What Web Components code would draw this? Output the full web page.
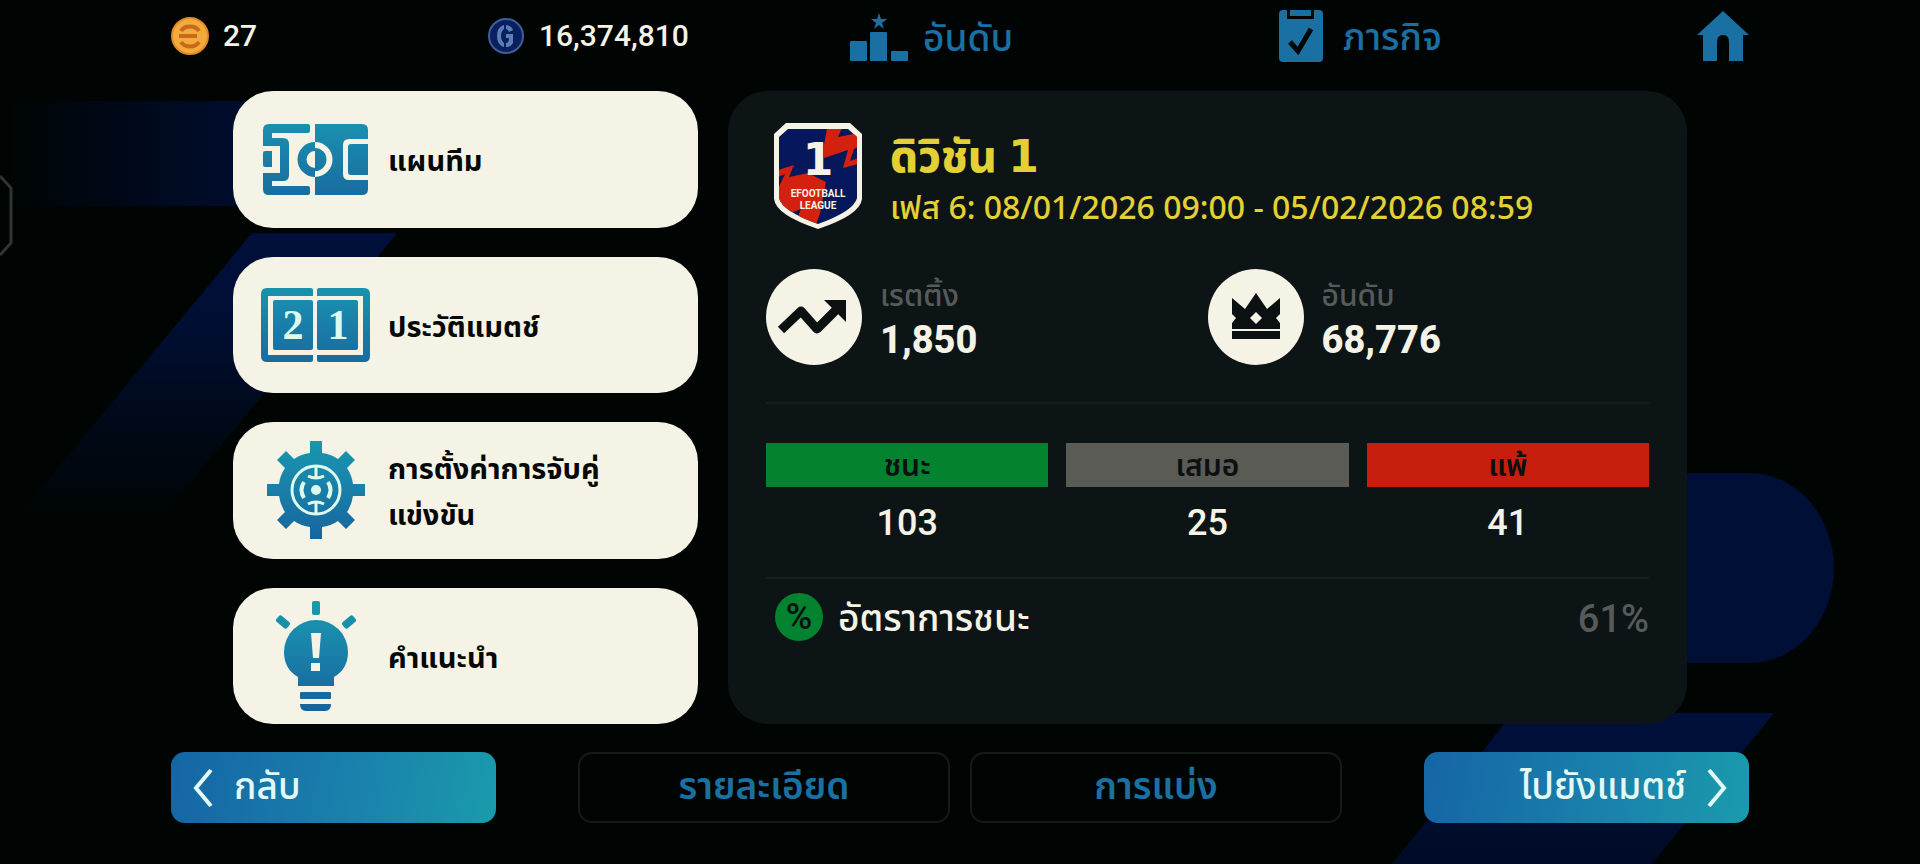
<!DOCTYPE html>
<html lang="th">
<head>
<meta charset="utf-8">
<meta name="viewport" content="width=device-width, initial-scale=1">
<title>ดิวิชัน 1</title>
<style>
  body {
    margin: 0;
    background: #000402;
    color: #f5f3e6;
    font-family: Roboto, "Noto Sans Thai", "Noto Sans", sans-serif;
    --side: 171px;
    --cream: #f5f3e6;
    --blue: #1a70a3;
    --muted: #565b5a;
    --yellow: #e3d034;
    --ink: #0b1010;
  }
</style>
</head>
<body>

<league-screen>
  <coin-balance slot="header" kind="coin">27</coin-balance>
  <coin-balance slot="header" kind="gp">16,374,810</coin-balance>
  <top-link slot="header" icon="ranking">อันดับ</top-link>
  <top-link slot="header" icon="missions">ภารกิจ</top-link>
  <top-link slot="header" icon="home" label="หน้าหลัก"></top-link>

  <menu-card slot="menu" icon="pitch">แผนทีม</menu-card>
  <menu-card slot="menu" icon="score">ประวัติแมตช์</menu-card>
  <menu-card slot="menu" icon="gear">การตั้งค่าการจับคู่<br>แข่งขัน</menu-card>
  <menu-card slot="menu" icon="bulb">คำแนะนำ</menu-card>

  <division-panel slot="panel">
    <division-title slot="title" number="1">ดิวิชัน
      <span slot="phase">เฟส 6: 08/01/2026 09:00 - 05/02/2026 08:59</span>
    </division-title>
    <stat-badge slot="stats" icon="trend" label="เรตติ้ง">1,850</stat-badge>
    <stat-badge slot="stats" icon="crown" label="อันดับ">68,776</stat-badge>
    <result-tally slot="results" type="win" label="ชนะ">103</result-tally>
    <result-tally slot="results" type="draw" label="เสมอ">25</result-tally>
    <result-tally slot="results" type="loss" label="แพ้">41</result-tally>
    <win-rate slot="rate" label="อัตราการชนะ">61%</win-rate>
  </division-panel>

  <nav-button slot="footer" kind="back">กลับ</nav-button>
  <nav-button slot="actions">รายละเอียด</nav-button>
  <nav-button slot="actions">การแบ่ง</nav-button>
  <nav-button slot="next" kind="next">ไปยังแมตช์</nav-button>
</league-screen>

<script>
const TEAL_GRADIENT = `
  <defs>
    <linearGradient id="teal" gradientUnits="userSpaceOnUse" x1="0" y1="0" x2="0" y2="110">
      <stop offset="0" stop-color="#179ba8"/>
      <stop offset="0.3" stop-color="#1a8aad"/>
      <stop offset="1" stop-color="#17629c"/>
    </linearGradient>
  </defs>`;

const ICONS = {
  coin: `<svg width="38" height="38" viewBox="0 0 38 38">
    <circle cx="19" cy="19" r="18" fill="#f2ab3c" stroke="#e08a22" stroke-width="2"/>
    <g fill="none" stroke="#c9691c" stroke-width="4">
      <path d="M10 14a10 8 0 0 1 18 0M10 25a10 8 0 0 0 18 0"/>
      <path d="M8 19h18"/>
    </g></svg>`,

  gp: `<svg width="38" height="38" viewBox="0 0 38 38">
    <circle cx="19" cy="19" r="17" fill="#0a1f5e" stroke="#3f5f9c" stroke-width="2"/>
    <path d="M17 8Q10 10 10 19T17 30V26Q14 24 14 19T17 12zM19 17H26V26Q24 30 19 30V26Q22 26 22 21H19zM19 8Q25 9 26 13L22 15Q21 12 19 12z" fill="#5b7fb8"/></svg>`,

  ranking: `<svg width="58" height="48" viewBox="0 0 58 48">
    <g fill="#1a70a3">
      <rect x="0" y="28" width="17" height="20" rx="1"/>
      <rect x="20" y="19" width="17" height="29" rx="1"/>
      <rect x="41" y="38" width="17" height="10" rx="1"/>
      <path d="M29 0l2 6h6l-5 4 2 6-5-4-5 4 2-6-5-4h6z"/>
    </g></svg>`,

  missions: `<svg width="44" height="52" viewBox="0 0 44 52">
    <path d="M4 0h4v9h27V0h5q4 0 4 4v44q0 4-4 4H4q-4 0-4-4V4q0-4 4-4z" fill="#1a70a3"/>
    <path d="M11 0h21v6H11z" fill="#1a70a3"/>
    <path d="M11 32l8 9 13-22" fill="none" stroke="#000402" stroke-width="5"/></svg>`,

  home: `<svg width="52" height="50" viewBox="0 0 52 50">
    <path d="M26 0L52 24H46V50H32V31q0-7-6-7t-6 7V50H6V24H0z" fill="#1a70a3"/></svg>`,

  pitch: `<svg width="110" height="110" viewBox="0 0 110 110">${TEAL_GRADIENT}
    <g fill="url(#teal)">
      <path d="M47 20H8q-6 0-6 6V42H19V69H2V85q0 6 6 6H47q2 0 2-2V84q0-2-2-2H11V77H22q6 0 6-6V40q0-6-6-6H11V29H47q2 0 2-2V22q0-2-2-2z"/>
      <path d="M2 49q0-2 2-2H11V63H4q-2 0-2-2z"/>
      <path d="M54 20H101q6 0 6 6V35H88q-6 0-6 6V70q0 6 6 6H107V85q0 6-6 6H54z"/>
    </g>
    <path d="M54 38a17 17 0 0 0 0 35V64a8 8 0 0 1 0-17z" fill="url(#teal)"/>
    <path d="M107 40H90q-3 0-3 3V68q0 3 3 3H107z" fill="url(#teal)"/>
    <path d="M54 41a14 14 0 0 1 0 29" fill="none" stroke="#f5f3e6" stroke-width="6"/></svg>`,

  score: `<svg width="110" height="110" viewBox="0 0 110 110">${TEAL_GRADIENT}
    <g fill="url(#teal)">
      <path d="M50 18H6q-6 0-6 6V86q0 6 6 6H50q2 0 2-2V85H7V26H52V20q0-2-2-2z"/>
      <path d="M58 18H103q6 0 6 6V86q0 6-6 6H58q-2 0-2-2V85H102V26H56V20q0-2 2-2z"/>
      <rect x="12" y="30" width="40" height="50" rx="2"/>
      <rect x="56" y="30" width="41" height="50" rx="2"/>
    </g>
    <g fill="#dcfbee" font-family="Liberation Serif" font-weight="700" font-size="42" text-anchor="middle">
      <text x="32" y="69">2</text><text x="77" y="69">1</text>
    </g></svg>`,

  gear: `<svg width="110" height="110" viewBox="0 0 110 110">${TEAL_GRADIENT}
    <path fill="url(#teal)" d="M49 6H61V18A38 38 0 0 1 77 24L85 16L94 25L86 33A38 38 0 0 1 92 49H104V61H92A38 38 0 0 1 86 77L94 85L85 94L77 86A38 38 0 0 1 61 92V104H49V92A38 38 0 0 1 33 86L25 94L16 85L24 77A38 38 0 0 1 18 61H6V49H18A38 38 0 0 1 24 33L16 25L25 16L33 24A38 38 0 0 1 49 18z"/>
    <g fill="none" stroke="#dcfbee" stroke-width="3">
      <circle cx="55" cy="55" r="24"/>
      <path d="M55 31V42M55 68V79"/>
      <path d="M43 47a15 15 0 0 0 0 16M67 47a15 15 0 0 1 0 16" stroke-width="4"/>
      <path d="M47 41q8 4 16 0M47 69q8-4 16 0"/>
    </g>
    <circle cx="55" cy="55" r="5" fill="#dcfbee"/></svg>`,

  bulb: `<svg width="110" height="110" viewBox="0 0 110 110">${TEAL_GRADIENT}
    <g fill="url(#teal)">
      <rect x="51" y="0" width="8" height="14" rx="2"/>
      <path d="M55 19a32 32 0 0 1 32 32q0 17-14 25V85H37V76Q23 68 23 51A32 32 0 0 1 55 19z"/>
      <rect x="39" y="91" width="31" height="7" rx="1"/>
      <path d="M39 103H70q0 7-6 7H45q-6 0-6-7z"/>
      <rect x="15" y="17" width="14" height="8" rx="2" transform="rotate(40 22 21)"/>
      <rect x="81" y="17" width="14" height="8" rx="2" transform="rotate(-40 88 21)"/>
    </g>
    <path d="M50 32H60L58 57H52zM50 62H59V70H50z" fill="#f5f3e6"/></svg>`,

  trend: `<svg width="96" height="96" viewBox="0 0 96 96">
    <circle cx="48" cy="48" r="48" fill="#f5f3e6"/>
    <path d="M15 61L35 42L51 60L73 38" fill="none" stroke="#0b1010" stroke-width="9" stroke-linejoin="round"/>
    <path d="M58 31H80V53z" fill="#0b1010"/></svg>`,

  crown: `<svg width="96" height="96" viewBox="0 0 96 96">
    <circle cx="48" cy="48" r="48" fill="#f5f3e6"/>
    <g fill="#0b1010">
      <path d="M24 29L37 40L48 24L59 40L72 29V45L68 49L72 54V60H24V54L28 49L24 45z"/>
      <rect x="24" y="62" width="48" height="8"/>
    </g>
    <path d="M48 43L54 49L48 55L42 49z" fill="#f5f3e6"/></svg>`,

  shield: `<svg width="88" height="106" viewBox="0 0 88 106">
    <path d="M12 0H76L88 11V76Q86 92 44 106Q2 92 0 76V11z" fill="#f5f3e6"/>
    <clipPath id="inner"><path d="M14 6H74L83 14V75Q80 88 44 101Q8 88 5 75V14z"/></clipPath>
    <g clip-path="url(#inner)">
      <rect width="88" height="106" fill="#06175c"/>
      <g fill="#d3200f">
        <path d="M53 5H68L64 14L84 10V24L80 26L76 38L84 35V41L69 45L74 27L50 35L50 22z"/>
        <path d="M4 47L20 42L15 54L34 50L52 59L46 90L42 102L22 98L27 86L12 92L4 80V66L11 51L4 54z"/>
      </g>
    </g>
    <g fill="#f5f3e6" font-weight="700" text-anchor="middle">
      <text x="44" y="52" font-family="DejaVu Sans" font-size="44">1</text>
      <text x="44" y="74" font-size="10">EFOOTBALL</text>
      <text x="44" y="86" font-size="10">LEAGUE</text>
    </g></svg>`,

  back: `<svg width="22" height="38" viewBox="0 0 22 38">
    <path d="M19 1L4 19L19 37" fill="none" stroke="#e2faf5" stroke-width="4"/></svg>`,

  next: `<svg width="22" height="38" viewBox="0 0 22 38">
    <path d="M3 1L18 19L3 37" fill="none" stroke="#e2faf5" stroke-width="4"/></svg>`
};

/**
 * Attaches an open shadow root filled with the given html.
 * @param $elem
 * @param html
 */
function render($elem, html) {
  const $template = document.createElement("template");
  $template.innerHTML = html;
  $elem.attachShadow({ mode: "open" }).appendChild($template.content);
}

class LeagueScreen extends HTMLElement {
  constructor() {
    super();
    render(this, `
      <style>
        :host {
          display: flex;
          flex-direction: column;
          min-height: 100vh;
          position: relative;
          isolation: isolate;
          overflow: hidden;
        }

        /* Dark blue shapes behind everything */
        .backdrop {
          position: absolute;
          inset: 0;
          width: 100%;
          height: 100%;
          z-index: -1;
        }

        header {
          display: grid;
          grid-template-columns: 316fr 363fr 429fr 470fr;
          align-items: center;
          min-height: 74px;
          padding: 0 var(--side);
        }

        /* The home link shares the last column with the missions link */
        ::slotted([icon="missions"]) { grid-area: 1 / 4; }
        ::slotted([icon="home"]) {
          grid-area: 1 / 4;
          justify-self: end;
        }

        main {
          flex: 1;
          display: grid;
          grid-template-columns: 465fr 959fr;
          gap: 30px;
          margin: 17px 0 28px;
          padding: 0 233px;
        }

        .menu {
          display: grid;
          grid-auto-rows: 1fr;
          gap: 29px;
        }

        footer {
          display: grid;
          grid-template-columns: 325fr 764fr 325fr;
          gap: 82px;
          padding: 0 var(--side) 41px;
        }

        .actions {
          display: grid;
          grid-template-columns: 1fr 1fr;
          gap: 20px;
        }
      </style>
      <svg class="backdrop" viewBox="0 0 1920 864" preserveAspectRatio="none" aria-hidden="true">
        <defs>
          <linearGradient id="band" x1="0" x2="1"><stop offset="0" stop-color="#000d30" stop-opacity="0"/><stop offset="0.8" stop-color="#000d30"/></linearGradient>
          <linearGradient id="fade" x1="0" x2="0" y1="0" y2="1"><stop offset="0" stop-color="#00103c"/><stop offset="0.3" stop-color="#000e32"/><stop offset="0.6" stop-color="#000c26" stop-opacity="0.6"/><stop offset="0.9" stop-color="#000c26" stop-opacity="0"/></linearGradient>
          <linearGradient id="low" x1="0" x2="0" y1="0" y2="1"><stop offset="0" stop-color="#00103c"/><stop offset="1" stop-color="#000b26"/></linearGradient>
        </defs>
        <path d="M0 101H320V206H0z" fill="url(#band)"/>
        <path d="M252 233H397L130 555H-14z" fill="url(#fade)"/>
        <path d="M1600 473H1750A84 95 0 0 1 1750 663H1600z" fill="#000f36"/>
        <path d="M1513 713H1774L1652 864H1392z" fill="url(#low)"/>
        <path d="M0 176L11 188V243L0 255" fill="none" stroke="#2f3534" stroke-width="3"/>
      </svg>
      <header><slot name="header"></slot></header>
      <main>
        <nav class="menu"><slot name="menu"></slot></nav>
        <slot name="panel"></slot>
      </main>
      <footer>
        <slot name="footer"></slot>
        <div class="actions"><slot name="actions"></slot></div>
        <slot name="next"></slot>
      </footer>
    `);
  }
}

class CoinBalance extends HTMLElement {
  connectedCallback() {
    render(this, `
      <style>
        :host {
          display: flex;
          align-items: center;
          gap: 14px;
          padding-bottom: 2px;
          font-size: 30px;
          font-weight: 500;
          line-height: 36px;
        }
        svg { display: block; }
      </style>
      ${ICONS[this.getAttribute("kind")]}<span><slot></slot></span>
    `);
  }
}

class TopLink extends HTMLElement {
  connectedCallback() {
    const label = this.getAttribute("label");
    render(this, `
      <style>
        :host {
          display: block;
          padding-top: 2px;
        }
        a {
          display: inline-flex;
          align-items: center;
          gap: 15px;
          color: var(--blue);
          font-size: 37px;
          font-weight: 500;
          line-height: 48px;
          text-decoration: none;
        }
        :host([icon="missions"]) a { gap: 20px; }
        span { padding-top: 4px; }
        svg { display: block; }
      </style>
      <a href="#${this.getAttribute("icon")}" ${label ? `aria-label="${label}"` : ""}>${ICONS[this.getAttribute("icon")]}${label ? "" : "<span><slot></slot></span>"}</a>
    `);
  }
}

class MenuCard extends HTMLElement {
  connectedCallback() {
    render(this, `
      <style>
        :host { display: grid; }
        button {
          display: flex;
          align-items: center;
          gap: 17px;
          padding: 0 28px;
          border: 0;
          border-radius: 40px;
          background: var(--cream);
          color: #050808;
          font: 700 29px/46px "Noto Sans Thai", "Noto Sans", sans-serif;
          text-align: left;
        }
        svg { display: block; flex: none; }
        span { padding-top: 6px; }
      </style>
      <button type="button">${ICONS[this.getAttribute("icon")]}<span><slot></slot></span></button>
    `);
  }
}

class DivisionPanel extends HTMLElement {
  constructor() {
    super();
    render(this, `
      <style>
        :host {
          display: block;
          padding: 32px 38px;
          border-radius: 40px;
          background: #0d1416;
        }
        .stats {
          display: grid;
          grid-template-columns: 1fr 1fr;
          margin-top: 40px;
        }
        .results {
          display: grid;
          grid-template-columns: repeat(3, 1fr);
          gap: 18px;
        }
        hr {
          margin: 0;
          border: 0;
          border-top: 2px solid #151d1f;
        }
        .stats + hr { margin: 37px 0 39px; }
        .results + hr { margin: 18px 0 12px; }
      </style>
      <slot name="title"></slot>
      <div class="stats"><slot name="stats"></slot></div>
      <hr>
      <div class="results"><slot name="results"></slot></div>
      <hr>
      <slot name="rate"></slot>
    `);
  }
}

class DivisionTitle extends HTMLElement {
  connectedCallback() {
    render(this, `
      <style>
        :host {
          display: flex;
          align-items: center;
          gap: 28px;
          padding-left: 8px;
          color: var(--yellow);
        }
        svg { display: block; flex: none; }
        h1 {
          margin: 0;
          padding-top: 8px;
          font: 800 44px/52px "Noto Sans Thai", "Noto Sans", sans-serif;
        }
        .number { font-family: "DejaVu Sans"; }
        p {
          margin: 0;
          font: 500 32px/44px "Noto Sans", "Noto Sans Thai", sans-serif;
        }
      </style>
      ${ICONS.shield}
      <div>
        <h1><slot></slot> <span class="number">${this.getAttribute("number")}</span></h1>
        <p><slot name="phase"></slot></p>
      </div>
    `);
  }
}

class StatBadge extends HTMLElement {
  connectedCallback() {
    render(this, `
      <style>
        :host {
          display: flex;
          align-items: center;
          gap: 18px;
        }
        svg { display: block; }
        .label {
          padding-top: 4px;
          color: var(--muted);
          font-size: 30px;
          font-weight: 500;
          line-height: 42px;
        }
        .value {
          font-size: 38px;
          font-weight: 800;
          line-height: 46px;
        }
      </style>
      ${ICONS[this.getAttribute("icon")]}
      <div>
        <div class="label">${this.getAttribute("label")}</div>
        <div class="value"><slot></slot></div>
      </div>
    `);
  }
}

class ResultTally extends HTMLElement {
  connectedCallback() {
    render(this, `
      <style>
        :host {
          display: block;
          text-align: center;
        }
        :host([type="win"]) { --bar: #03832f; }
        :host([type="draw"]) { --bar: #5a5b54; }
        :host([type="loss"]) { --bar: #c81e0e; }
        .label {
          padding-top: 2px;
          background: var(--bar);
          color: var(--ink);
          font-size: 30px;
          font-weight: 600;
          line-height: 42px;
        }
        .value {
          font-size: 36px;
          font-weight: 500;
          line-height: 72px;
        }
      </style>
      <div class="label">${this.getAttribute("label")}</div>
      <div class="value"><slot></slot></div>
    `);
  }
}

class WinRate extends HTMLElement {
  connectedCallback() {
    render(this, `
      <style>
        :host {
          display: flex;
          align-items: center;
          gap: 15px;
          padding-left: 9px;
          font-size: 37px;
          font-weight: 500;
          line-height: 48px;
        }
        .badge {
          width: 48px;
          border-radius: 50%;
          background: #03832f;
          color: var(--ink);
          text-align: center;
          font-size: 36px;
        }
        .label, .value { padding-top: 4px; }
        .value {
          margin-left: auto;
          color: var(--muted);
          font-size: 38px;
        }
      </style>
      <span class="badge">%</span>
      <span class="label">${this.getAttribute("label")}</span>
      <span class="value"><slot></slot></span>
    `);
  }
}

class NavButton extends HTMLElement {
  connectedCallback() {
    const kind = this.getAttribute("kind");
    render(this, `
      <style>
        :host { display: grid; }
        button {
          display: flex;
          align-items: center;
          justify-content: center;
          gap: 20px;
          height: 71px;
          padding: 0 21px;
          box-sizing: border-box;
          border: 2px solid #141a19;
          border-radius: 14px;
          background: #000402;
          color: var(--blue);
          font: 600 37px/48px "Noto Sans Thai", "Noto Sans", sans-serif;
        }
        :host([kind]) button {
          border: 0;
          background: linear-gradient(100deg, #1565a5, #1a83ac 60%, #1a9bac);
          color: #e2faf5;
          font-weight: 500;
        }
        :host([kind="back"]) button { justify-content: flex-start; }
        :host([kind="next"]) button { justify-content: flex-end; }
        svg { display: block; }
      </style>
      <button type="button">${kind === "back" ? ICONS.back : ""}<span><slot></slot></span>${kind === "next" ? ICONS.next : ""}</button>
    `);
  }
}

customElements.define("league-screen", LeagueScreen);
customElements.define("coin-balance", CoinBalance);
customElements.define("top-link", TopLink);
customElements.define("menu-card", MenuCard);
customElements.define("division-panel", DivisionPanel);
customElements.define("division-title", DivisionTitle);
customElements.define("stat-badge", StatBadge);
customElements.define("result-tally", ResultTally);
customElements.define("win-rate", WinRate);
customElements.define("nav-button", NavButton);
</script>
</body>
</html>
